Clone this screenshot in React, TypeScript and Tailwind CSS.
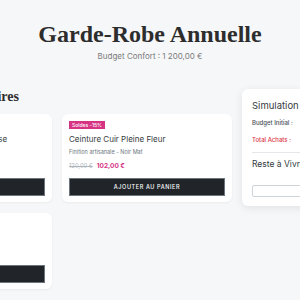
import React from "react";

type Item = {
  name: string;
  desc: string;
  price: string;
  oldPrice?: string;
  badge?: string;
};

const items: Item[] = [
  { name: "Chemise en Lin Coupe Danoise", desc: "Lin lavé - Blanc Cassé", price: "89,00 €", oldPrice: "110,00 €", badge: "Nouveauté" },
  { name: "Ceinture Cuir Pleine Fleur", desc: "Finition artisanale - Noir Mat", price: "102,00 €", oldPrice: "120,00 €", badge: "Soldes -15%" },
  { name: "Écharpe Laine Mérinos", desc: "Maille fine - Gris Chiné", price: "65,00 €" },
];

function ProductCard({ item }: { item: Item }) {
  return (
    <div className="flex flex-col rounded-[6px] bg-white px-[7px] pb-[6px] pt-[7px] shadow-[0_1px_3px_rgba(0,0,0,0.05)]">
      {item.badge && (
        <span className="mb-[4px] self-start bg-[#d63384] px-[3px] text-[5px] font-medium leading-[8px] text-white">
          {item.badge}
        </span>
      )}
      <h3 className="text-[8px] leading-[12px] text-[#343a40]">{item.name}</h3>
      <p className="mt-[3px] text-[5.5px] leading-[8px] text-[#6c757d]">{item.desc}</p>
      <div className="mt-[5px] flex items-baseline gap-[4px] leading-[10px]">
        {item.oldPrice ? (
          <>
            <span className="text-[5.8px] text-[#adb5bd] line-through">{item.oldPrice}</span>
            <span className="text-[6.5px] font-bold text-[#d63384]">{item.price}</span>
          </>
        ) : (
          <span className="text-[6.5px] font-bold text-[#343a40]">{item.price}</span>
        )}
      </div>
      <button className="mt-[7px] h-[18px] w-full border border-[#6c757d] bg-[#212529] text-[5.5px] font-medium uppercase tracking-[0.6px] text-white">
        Ajouter au panier
      </button>
    </div>
  );
}

export default function App() {
  return (
    <div className="min-h-screen overflow-hidden bg-[#f6f7f9] pb-10 font-['Inter',sans-serif]">
      <header className="pt-[19px] text-center">
        <h1 className="font-['Liberation_Serif',serif] text-[24px] font-bold leading-[30px] text-[#2d2d2d]">
          Garde-Robe Annuelle
        </h1>
        <p className="mt-[1px] text-[8px] leading-[12px] text-[#7a7a7a]">Budget Confort : 1 200,00 €</p>
      </header>

      <div className="mt-[26px] flex justify-center">
        <div className="grid shrink-0 grid-cols-[350px_176px] items-start gap-[10px]">
          <section>
            <h2 className="mb-[8px] font-['Liberation_Serif',serif] text-[14px] font-bold leading-[18px] text-[#2d2d2d]">
              Sélection d'Accessoires
            </h2>
            <div className="grid grid-cols-2 gap-[11px_10px]">
              {items.map((it) => (
                <ProductCard key={it.name} item={it} />
              ))}
            </div>
          </section>

          <aside className="mt-[1px] rounded-[6px] bg-white px-[10px] pb-[9px] pt-[10px] shadow-[0_2px_8px_rgba(0,0,0,0.09)]">
            <h3 className="text-[9.5px] leading-[14px] text-[#343a40]">Simulation Budget</h3>
            <div className="mt-[6px] flex justify-between text-[6px] font-medium leading-[8px] text-[#495057]">
              <span>Budget Initial :</span>
              <span>1 200,00 €</span>
            </div>
            <div className="mt-[9px] flex justify-between text-[6px] font-medium leading-[8px] text-[#dc3545]">
              <span>Total Achats :</span>
              <span>102,00 €</span>
            </div>
            <hr className="mt-[8px] border-[#e5e7eb]" />
            <div className="mt-[5px] flex justify-between text-[8.5px] leading-[12px] text-[#343a40]">
              <span>Reste à Vivre</span>
              <span className="font-bold">1 098,00 €</span>
            </div>
            <input
              readOnly
              className="mt-[15px] block h-[12px] w-full rounded-[2px] border border-[#ced4da] bg-white"
            />
          </aside>
        </div>
      </div>
    </div>
  );
}
